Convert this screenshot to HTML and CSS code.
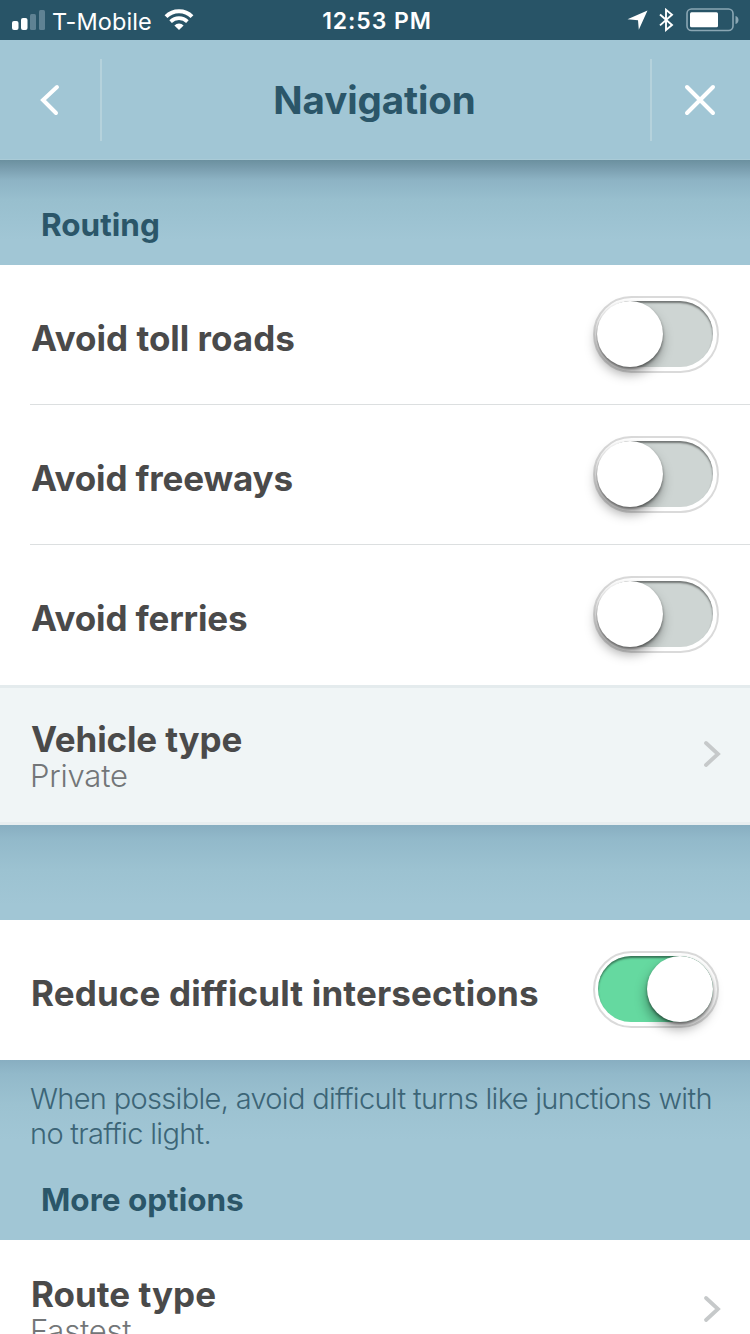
FILE: index.html
```html
<!DOCTYPE html>
<html lang="en">
<head>
    <meta charset="UTF-8">
    <meta name="viewport" content="width=device-width, initial-scale=1.0">
    <title>Navigation</title>
    <link rel="stylesheet" href="styles.css">
</head>
<body>

<div class="status-bar">
    <div class="status-left">
        <svg width="34" height="21" viewBox="0 0 34 21">
            <rect x="0" y="11" width="6.5" height="9" rx="2" fill="#fff"/>
            <rect x="9" y="8" width="6.5" height="12" rx="2" fill="#fff"/>
            <rect x="18" y="4" width="6" height="16" rx="1.5" fill="#5f8293"/>
            <rect x="27" y="0" width="6" height="20" rx="1.5" fill="#5f8293"/>
        </svg>
        <span class="carrier">T-Mobile</span>
        <svg class="wifi" width="30" height="22" viewBox="0 0 30 22">
            <path d="M2 7.6a18.4 18.4 0 0 1 26 0" fill="none" stroke="#fff" stroke-width="4"/>
            <path d="M6.6 12.6a12 12 0 0 1 16.8 0" fill="none" stroke="#fff" stroke-width="3.6"/>
            <path d="M15 21l-4.6-4.6a6.5 6.5 0 0 1 9.2 0z" fill="#fff"/>
        </svg>
    </div>
    <span class="clock">12:53 PM</span>
    <div class="status-right">
        <svg width="21" height="20" viewBox="0 0 21 20">
            <path d="M20.5 0.5L0.5 9.2l10.5 1 0.8 9.6z" fill="#fff"/>
        </svg>
        <svg class="bluetooth" width="15" height="24" viewBox="0 0 15 24">
            <path d="M1 6.5l12 10.5-6 5V1.8l6 5L1 17.4" fill="none" stroke="#fff" stroke-width="1.9"/>
        </svg>
        <svg class="battery" width="54" height="24" viewBox="0 0 54 24">
            <rect x="1" y="1" width="46" height="21.5" rx="4.5" fill="none" stroke="#8ba7b4" stroke-width="1.6"/>
            <rect x="4" y="4.2" width="28" height="15" rx="1.5" fill="#fff"/>
            <path d="M49.5 8c4 1 4 7 0 8z" fill="#8ba7b4"/>
        </svg>
    </div>
</div>

<header class="header">
    <div class="header-btn back">
        <svg width="22" height="32" viewBox="0 0 22 32">
            <path d="M18 3L4 16l13 13" fill="none" stroke="#fff" stroke-width="4" stroke-linecap="round"/>
        </svg>
    </div>
    <h1>Navigation</h1>
    <div class="header-btn close">
        <svg width="32" height="32" viewBox="0 0 32 32">
            <path d="M3 3l26 26M29 3L3 29" stroke="#fff" stroke-width="4" stroke-linecap="round"/>
        </svg>
    </div>
</header>

<div class="section section-top">
    <h2>Routing</h2>
</div>

<div class="list">
    <div class="row">
        <div class="row-inner">
            <span class="label">Avoid toll roads</span>
            <div class="toggle"><div class="track"><div class="knob"></div></div></div>
        </div>
    </div>
    <div class="row">
        <div class="row-inner">
            <span class="label narrow">Avoid freeways</span>
            <div class="toggle"><div class="track"><div class="knob"></div></div></div>
        </div>
    </div>
    <div class="row">
        <div class="row-inner">
            <span class="label narrow">Avoid ferries</span>
            <div class="toggle"><div class="track"><div class="knob"></div></div></div>
        </div>
    </div>
    <div class="row row-link active">
        <div class="link-text">
            <span class="label narrow">Vehicle type</span>
            <span class="value">Private</span>
        </div>
        <svg width="18" height="28" viewBox="0 0 18 28">
            <path d="M3 3l12 11L3 25" fill="none" stroke="#c6c9ca" stroke-width="3.8" stroke-linecap="round"/>
        </svg>
    </div>
</div>

<div class="section section-gap"></div>

<div class="list">
    <div class="row">
        <div class="row-inner">
            <span class="label wide">Reduce difficult intersections</span>
            <div class="toggle on"><div class="track"><div class="knob"></div></div></div>
        </div>
    </div>
</div>

<div class="section section-note">
    <p>When possible, avoid difficult turns like junctions with no traffic light.</p>
    <h2>More options</h2>
</div>

<div class="list">
    <div class="row row-link">
        <div class="link-text">
            <span class="label">Route type</span>
            <span class="value">Fastest</span>
        </div>
        <svg width="18" height="28" viewBox="0 0 18 28">
            <path d="M3 3l12 11L3 25" fill="none" stroke="#c6c9ca" stroke-width="3.8" stroke-linecap="round"/>
        </svg>
    </div>
</div>

</body>
</html>
```
FILE: styles.css
```css
* {
    box-sizing: border-box;
    margin: 0;
    padding: 0;
}

body {
    height: 1334px;
    overflow: hidden;
    background: #a1c6d5;
    font-family: Inter, "Liberation Sans", sans-serif;
    color: #4a4a4a;
}

svg {
    display: block;
    flex-shrink: 0;
}

.status-bar {
    height: 40px;
    display: flex;
    justify-content: space-between;
    align-items: center;
    padding: 0 10px 0 12px;
    background: #285467;
    color: #fff;
}

.status-left,
.status-right {
    width: 290px;
    display: flex;
    align-items: center;
}

.status-right {
    justify-content: flex-end;
}

.carrier {
    margin-left: 6px;
    padding-top: 2px;
    font-size: 23.5px;
    letter-spacing: 0.1px;
}

.wifi {
    margin-left: 12px;
}

.clock {
    font-size: 23px;
    font-weight: 600;
    letter-spacing: 0.9px;
    padding: 2px 0 0 2px;
    white-space: nowrap;
}

.bluetooth {
    margin-left: 11px;
}

.battery {
    margin-left: 12px;
}

.header {
    height: 120px;
    display: flex;
    align-items: center;
    justify-content: space-between;
    background: #a1c6d5;
    border-bottom: 1px solid #aacbd7;
}

.header h1 {
    margin-right: 3px;
    font-size: 38.5px;
    font-weight: 700;
    letter-spacing: -0.1px;
    color: #2b5669;
}

.header-btn {
    width: 102px;
    height: 82px;
    display: flex;
    align-items: center;
    justify-content: center;
}

.back {
    border-right: 2px solid #b5d2dc;
}

.close {
    width: 100px;
    padding-right: 2px;
    border-left: 2px solid #b5d2dc;
}

.section {
    background: linear-gradient(#88aec1 0, #92b9ca 14px, #9cc2d1 45px, #a1c6d5 80px);
}

.section h2 {
    padding-left: 41px;
    font-size: 31.5px;
    line-height: 40px;
    font-weight: 700;
    color: #2b5669;
}

.section-top {
    height: 105px;
    padding-top: 45px;
    background: linear-gradient(#6b909f 0, #7b9fb0 9px, #8db3c4 20px, #98bfce 40px, #a1c6d5 80px);
}

.section-gap {
    height: 95px;
}

.section-note {
    height: 180px;
    padding-top: 21px;
}

.section-note p {
    padding: 0 30px;
    font-size: 29px;
    line-height: 35px;
    font-weight: 300;
    letter-spacing: -0.68px;
    color: #3c6577;
}

.section-note h2 {
    margin-top: 29px;
}

.row {
    height: 140px;
    padding-left: 30px;
    background: #fff;
}

.row-inner {
    height: 140px;
    display: flex;
    align-items: center;
    justify-content: space-between;
    padding: 0 31px 0 1px;
    border-bottom: 1px solid #dcdfe0;
}

.row:nth-child(3) .row-inner,
.row:only-child .row-inner {
    border-bottom-color: transparent;
}

.label {
    font-size: 35px;
    line-height: 40px;
    font-weight: 700;
    padding-top: 6px;
    white-space: nowrap;
}

.wide {
    letter-spacing: 0.15px;
}

.narrow {
    letter-spacing: -0.15px;
}

.toggle {
    width: 126px;
    height: 77px;
    padding: 3px;
    border: 2px solid #dadada;
    border-radius: 39px;
    background: #fff;
}

.track {
    height: 66px;
    width: 115px;
    display: flex;
    border-radius: 33px;
    background: #ced5d3;
    box-shadow: inset 0 2px 2px rgba(0, 0, 0, 0.45);
}

.knob {
    width: 66px;
    height: 66px;
    margin-left: -1px;
    border-radius: 50%;
    background: #fff;
    box-shadow: 0 2px 3px rgba(0, 0, 0, 0.45), -1px 7px 12px rgba(0, 0, 0, 0.35);
}

.on .track {
    justify-content: flex-end;
    background: #65d9a0;
}

.row-link {
    display: flex;
    align-items: center;
    justify-content: space-between;
    padding-right: 29px;
}

.row-link svg {
    margin-bottom: 2px;
}

.row-link .label {
    padding: 2px 0 0 1px;
}

.link-text {
    display: flex;
    flex-direction: column;
}

.value {
    font-size: 31px;
    line-height: 34px;
    font-weight: 300;
    letter-spacing: -0.2px;
    color: #737678;
}

.active {
    background: #f0f5f6;
    border-top: 3px solid #e4ebed;
    border-bottom: 3px solid #e8eef0;
}
```
